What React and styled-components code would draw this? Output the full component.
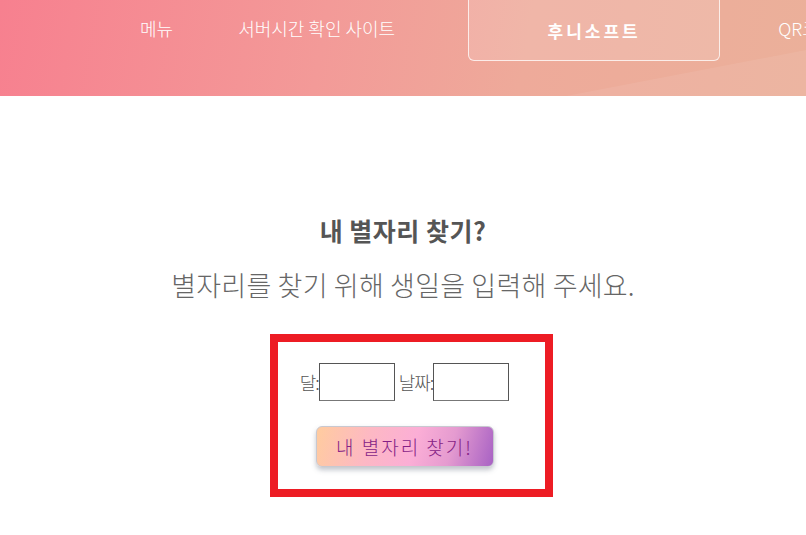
import React from 'react';
import styled, { createGlobalStyle } from 'styled-components';

const GlobalStyle = createGlobalStyle`
  html, body {
    margin: 0;
    padding: 0;
    background: #fff;
    font-family: "Noto Sans CJK KR", "Noto Sans", sans-serif;
  }
`;

const Header = styled.header`
  position: relative;
  height: 96px;
  overflow: hidden;
  background: linear-gradient(100deg, #f7808f 0%, #f39a98 40%, #eeaa9a 65%, #ebb09a 100%);
`;

const Wave = styled.svg`
  position: absolute;
  right: 0;
  bottom: 0;
  width: 300px;
  height: 96px;
`;

const Nav = styled.nav`
  position: relative;
  display: flex;
  align-items: flex-start;
  height: 100%;
  padding-left: 140px;
`;

const NavItem = styled.a`
  display: block;
  margin-top: 15px;
  margin-right: ${(p) => p.$gap}px;
  color: #fff;
  font-size: 18px;
  font-weight: 300;
  line-height: 26px;
  text-decoration: none;
  white-space: nowrap;
`;

const BrandBox = styled.a`
  display: flex;
  align-items: center;
  justify-content: center;
  flex: none;
  box-sizing: border-box;
  width: 252px;
  height: 71px;
  margin-top: -10px;
  margin-right: 58px;
  padding-top: 10px;
  border: 1px solid rgba(255, 255, 255, 0.75);
  border-radius: 6px;
  background: rgba(255, 255, 255, 0.14);
  color: #fff;
  font-size: 17px;
  font-weight: 700;
  letter-spacing: 3px;
  text-decoration: none;
`;

const Main = styled.main`
  display: flex;
  flex-direction: column;
  align-items: center;
  padding-top: 114px;
`;

const Title = styled.h2`
  margin: 0;
  color: #555;
  font-size: 25px;
  font-weight: 700;
  line-height: 40px;
  letter-spacing: 0.5px;
`;

const Subtitle = styled.p`
  margin: 16px 0 0;
  color: #666;
  font-size: 27px;
  font-weight: 300;
  line-height: 38px;
  letter-spacing: 0.2px;
`;

const Outer = styled.div`
  margin-top: 30px;
  padding-left: 17px;
`;

const FormBox = styled.div`
  box-sizing: border-box;
  width: 283px;
  height: 163px;
  border: 8px solid #ed1c24;
  display: flex;
  flex-direction: column;
  align-items: center;
  padding-top: 21px;
  padding-right: 14px;
`;

const Row = styled.div`
  display: flex;
  align-items: center;
  color: #555;
  font-size: 18px;
  font-weight: 300;
`;

const Label = styled.label`
  margin-left: ${(p) => p.$ml || 0}px;
  letter-spacing: -1px;
`;

const Input = styled.input`
  box-sizing: border-box;
  width: 76px;
  height: 38px;
  margin: 0;
  border: 1px solid #555;
  border-bottom-color: #777;
  background: #fff;
`;

const Button = styled.button`
  margin-top: 25px;
  width: 178px;
  height: 41px;
  border: 1px solid #c8c8d0;
  border-radius: 6px;
  background: linear-gradient(105deg, #ffcc9f 0%, #fdb8c4 30%, #fbaed6 55%, #e59bd0 75%, #a862c4 100%);
  box-shadow: 0 3px 5px rgba(80, 90, 110, 0.35);
  color: #861f86;
  font-family: "Noto Sans CJK KR", "Noto Sans", sans-serif;
  font-size: 19px;
  font-weight: 300;
  letter-spacing: 2px;
  cursor: pointer;
`;

export default function App() {
  return (
    <>
      <GlobalStyle />
      <Header>
        <Wave viewBox="0 0 300 96" preserveAspectRatio="none">
          <path d="M60 96 L300 50 L300 96 Z" fill="rgba(255,255,255,0.07)" />
        </Wave>
        <Nav>
          <NavItem $gap={65}>메뉴</NavItem>
          <NavItem $gap={73}>서버시간 확인 사이트</NavItem>
          <BrandBox>후니소프트</BrandBox>
          <NavItem $gap={0}>QR코드 만들기</NavItem>
        </Nav>
      </Header>
      <Main>
        <Title>내 별자리 찾기?</Title>
        <Subtitle>별자리를 찾기 위해 생일을 입력해 주세요.</Subtitle>
        <Outer>
          <FormBox>
            <Row>
              <Label>달:</Label>
              <Input type="text" />
              <Label $ml={4}>날짜:</Label>
              <Input type="text" />
            </Row>
            <Button>내 별자리 찾기!</Button>
          </FormBox>
        </Outer>
      </Main>
    </>
  );
}
